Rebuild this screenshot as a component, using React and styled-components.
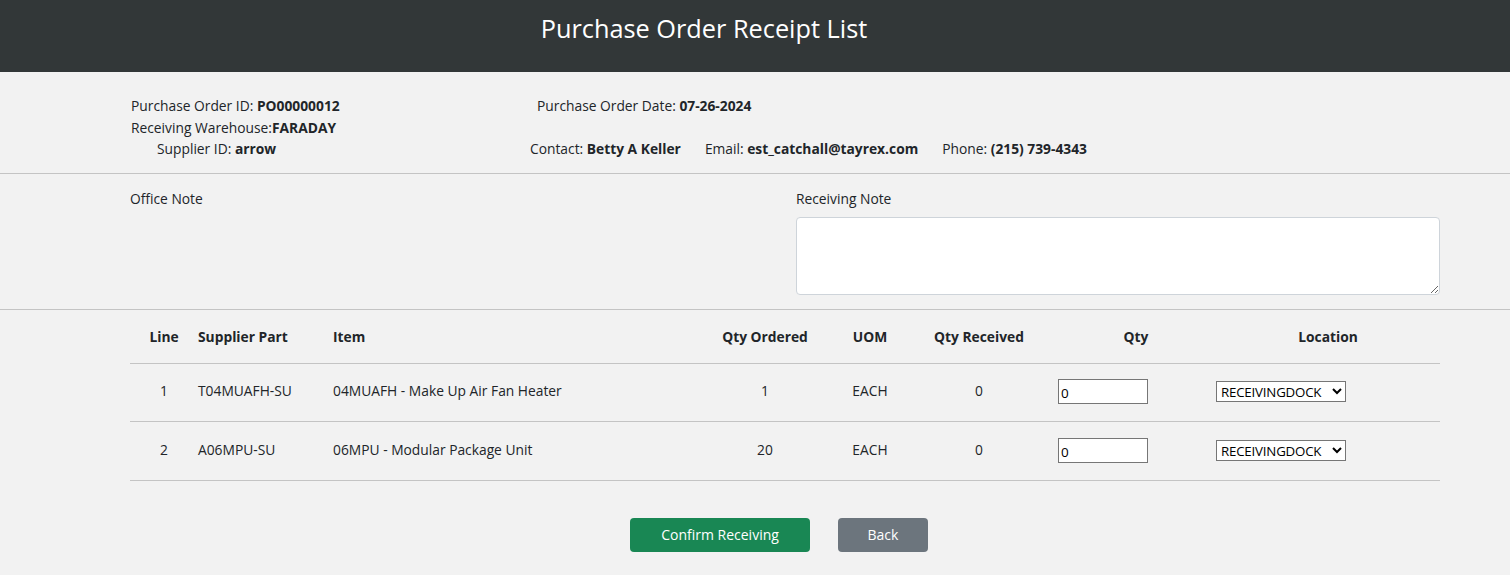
import React from "react";
import styled, { createGlobalStyle } from "styled-components";

const lines = [
  { line: 1, part: "T04MUAFH-SU", item: "04MUAFH - Make Up Air Fan Heater", ordered: 1, uom: "EACH", received: 0 },
  { line: 2, part: "A06MPU-SU", item: "06MPU - Modular Package Unit", ordered: 20, uom: "EACH", received: 0 },
];

const App = () => {
  return (
    <Page>
      <GlobalStyle />
      <Header>
        <Title>Purchase Order Receipt List</Title>
      </Header>

      <InfoSection>
        <InfoLeft>
          <InfoLine>
            Purchase Order ID: <b>PO00000012</b>
          </InfoLine>
          <InfoLine>
            Receiving Warehouse:<b>FARADAY</b>
          </InfoLine>
          <InfoLine indent>
            Supplier ID: <b>arrow</b>
          </InfoLine>
        </InfoLeft>
        <InfoRight>
          <InfoLine indent7>
            Purchase Order Date: <b>07-26-2024</b>
          </InfoLine>
          <InfoLine />
          <ContactRow>
            <span>
              Contact: <b>Betty A Keller</b>
            </span>
            <span>
              Email: <b>est_catchall@tayrex.com</b>
            </span>
            <span>
              Phone: <b>(215) 739-4343</b>
            </span>
          </ContactRow>
        </InfoRight>
      </InfoSection>

      <NotesSection>
        <NoteCol>
          <NoteLabel>Office Note</NoteLabel>
        </NoteCol>
        <NoteCol>
          <NoteLabel>Receiving Note</NoteLabel>
          <NoteArea />
        </NoteCol>
      </NotesSection>

      <TableWrap>
        <HeadRow>
          <Cell center>Line</Cell>
          <Cell>Supplier Part</Cell>
          <Cell>Item</Cell>
          <Cell center>Qty Ordered</Cell>
          <Cell center>UOM</Cell>
          <Cell center>Qty Received</Cell>
          <Cell center shift={8}>Qty</Cell>
          <Cell center>Location</Cell>
        </HeadRow>
        {lines.map((l) => (
          <BodyRow key={l.line}>
            <Cell center>{l.line}</Cell>
            <Cell>{l.part}</Cell>
            <Cell>{l.item}</Cell>
            <Cell center>{l.ordered}</Cell>
            <Cell center>{l.uom}</Cell>
            <Cell center>{l.received}</Cell>
            <Cell>
              <QtyInput defaultValue="0" />
            </Cell>
            <Cell>
              <LocationSelect defaultValue="RECEIVINGDOCK">
                <option>RECEIVINGDOCK</option>
              </LocationSelect>
            </Cell>
          </BodyRow>
        ))}
      </TableWrap>

      <ButtonBar>
        <Button color="#198754" width={180}>
          Confirm Receiving
        </Button>
        <Button color="#6c757d" width={90}>
          Back
        </Button>
      </ButtonBar>
    </Page>
  );
};

export default App;

const GlobalStyle = createGlobalStyle`
  body {
    margin: 0;
    background-color: #f2f2f2;
    font-family: "Open Sans", "Liberation Sans", sans-serif;
    font-size: 13.8px;
    color: #212529;
  }
`;

const Page = styled.div`
  min-height: 575px;
  background-color: #f2f2f2;
`;

const Header = styled.div`
  height: 72px;
  display: flex;
  align-items: center;
  justify-content: center;
  padding-right: 102px;
  background-color: #323738;
`;

const Title = styled.h1`
  margin: 0 0 16px;
  font-size: 25.3px;
  font-weight: 400;
  color: #ffffff;
`;

const InfoSection = styled.div`
  display: grid;
  grid-template-columns: 399px 1fr;
  padding: 23px 70px 13px 131px;
  border-bottom: 1px solid #c4c4c4;
`;

const InfoLeft = styled.div`
  display: flex;
  flex-direction: column;
`;

const InfoRight = styled.div`
  display: flex;
  flex-direction: column;
`;

const InfoLine = styled.div`
  height: 21.5px;
  line-height: 21.5px;
  padding-left: ${(p) => (p.indent ? "26px" : p.indent7 ? "7px" : "0")};
  white-space: nowrap;

  b {
    font-weight: 700;
  }
`;

const ContactRow = styled.div`
  display: flex;
  gap: 24px;
  height: 21.5px;
  line-height: 21.5px;
  white-space: nowrap;

  b {
    font-weight: 700;
  }
`;

const NotesSection = styled.div`
  display: grid;
  grid-template-columns: 1fr 1fr;
  column-gap: 22px;
  padding: 15px 70px 14px 130px;
  border-bottom: 1px solid #c4c4c4;
`;

const NoteCol = styled.div`
  display: flex;
  flex-direction: column;
`;

const NoteLabel = styled.div`
  line-height: 20px;
  margin-bottom: 8px;
`;

const NoteArea = styled.textarea`
  height: 78px;
  box-sizing: border-box;
  background: #ffffff;
  border: 1px solid #ced4da;
  border-radius: 4px;
  font-family: inherit;
  font-size: 13px;
`;

const columns = "68px 135px 367px 130px 80px 138px 168px 224px";

const HeadRow = styled.div`
  display: grid;
  grid-template-columns: ${columns};
  align-items: center;
  height: 53px;
  border-bottom: 1px solid #c4c4c4;
  font-weight: 700;
`;

const BodyRow = styled.div`
  display: grid;
  grid-template-columns: ${columns};
  align-items: center;
  height: 58.5px;
  box-sizing: border-box;
  padding-bottom: 3px;
  border-bottom: 1px solid #c4c4c4;
`;

const TableWrap = styled.div`
  margin: 0 70px 0 130px;
`;

const Cell = styled.div`
  text-align: ${(p) => (p.center ? "center" : "left")};
  padding-left: ${(p) => (p.shift ? `${p.shift}px` : "0")};
  white-space: nowrap;
`;

const QtyInput = styled.input`
  margin: 2px 0 0 10px;
  width: 90px;
  height: 25px;
  box-sizing: border-box;
  padding: 3px 2px 0;
  border: 1px solid #767676;
  background: #ffffff;
  font-family: "Open Sans", "Liberation Sans", sans-serif;
  font-size: 13.5px;
  color: #000;
`;

const LocationSelect = styled.select`
  margin-top: 2px;
  width: 130px;
  height: 21px;
  box-sizing: border-box;
  border: 1px solid #767676;
  background: #ffffff;
  font-family: "Open Sans", "Liberation Sans", sans-serif;
  font-size: 13.3px;
  letter-spacing: -0.2px;
  color: #000;
  padding: 0;
`;

const ButtonBar = styled.div`
  display: flex;
  justify-content: center;
  gap: 28px;
  padding: 37px 0 0 48px;
`;

const Button = styled.button`
  width: ${(p) => p.width}px;
  height: 34px;
  border: none;
  border-radius: 4px;
  background-color: ${(p) => p.color};
  color: #ffffff;
  font-family: "Open Sans", "Liberation Sans", sans-serif;
  font-size: 14px;
`;
